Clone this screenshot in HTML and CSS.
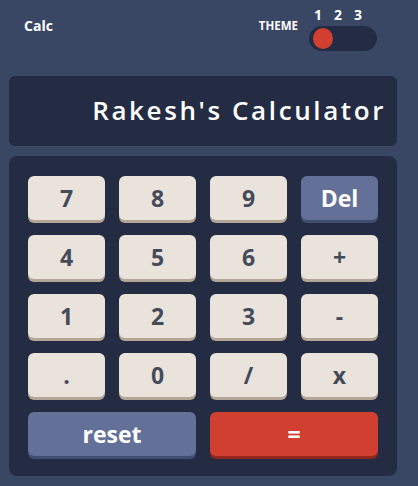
FILE: index.html
```html
<!DOCTYPE html>
<html lang="en">
<head>
<meta charset="utf-8">
<title>Calc</title>
<link rel="stylesheet" href="styles.css">
</head>
<body>
<div class="app">
  <header class="header">
    <h1 class="brand">Calc</h1>
    <div class="theme">
      <span class="theme-label">THEME</span>
      <div class="theme-switch">
        <div class="theme-nums"><span>1</span><span>2</span><span>3</span></div>
        <div class="toggle"><span class="knob"></span></div>
      </div>
    </div>
  </header>
  <div class="screen">Rakesh's Calculator</div>
  <div class="keypad">
    <button class="key">7</button>
    <button class="key">8</button>
    <button class="key">9</button>
    <button class="key key-blue">Del</button>
    <button class="key">4</button>
    <button class="key">5</button>
    <button class="key">6</button>
    <button class="key">+</button>
    <button class="key">1</button>
    <button class="key">2</button>
    <button class="key">3</button>
    <button class="key">-</button>
    <button class="key">.</button>
    <button class="key">0</button>
    <button class="key">/</button>
    <button class="key">x</button>
    <button class="key key-blue key-wide">reset</button>
    <button class="key key-red key-wide">=</button>
  </div>
</div>
</body>
</html>
```
FILE: styles.css
```css
* { box-sizing: border-box; }
html, body { margin: 0; padding: 0; }
body {
  background: #3a4764;
  font-family: "Open Sans", "Noto Sans", sans-serif;
  color: #ffffff;
  width: 418px;
  height: 486px;
  overflow: hidden;
}
.app {
  padding: 0 21px 0 9px;
}
.header {
  height: 76px;
  display: flex;
  justify-content: space-between;
  align-items: flex-start;
  padding: 0 20px 0 15px;
}
.brand {
  margin: 17px 0 0 0;
  font-size: 14px;
  font-weight: 700;
  line-height: 18px;
}
.theme {
  display: flex;
  align-items: flex-start;
  padding-top: 6px;
}
.theme-label {
  font-size: 11.5px;
  font-weight: 700;
  line-height: 14px;
  margin-top: 13px;
  margin-right: 11px;
}
.theme-switch {
  display: flex;
  flex-direction: column;
}
.theme-nums {
  display: flex;
  height: 20px;
  margin-left: -1px;
  font-size: 14px;
  font-weight: 700;
  line-height: 17px;
}
.theme-nums span {
  width: 20px;
  text-align: center;
}
.toggle {
  width: 68px;
  height: 25px;
  border-radius: 13px;
  background: #232c43;
  padding: 2px 4px;
  display: flex;
  align-items: center;
}
.knob {
  width: 20px;
  height: 21px;
  border-radius: 50%;
  background: #d03f2f;
}
.screen {
  height: 70px;
  background: #232c43;
  border-radius: 6px;
  display: flex;
  align-items: center;
  justify-content: flex-end;
  padding: 0 11px 2px 0;
  font-size: 26px;
  font-weight: 600;
  letter-spacing: 2.6px;
}
.keypad {
  margin-top: 10px;
  background: #232c43;
  border-radius: 8px;
  padding: 20px 19px 20px 19px;
  display: grid;
  grid-template-columns: repeat(4, 1fr);
  column-gap: 14px;
  row-gap: 15px;
}
.key {
  height: 44px;
  border: 0;
  border-radius: 6px;
  background: #eae3dc;
  box-shadow: 0 3px 0 #b4a597;
  color: #444b5a;
  font-family: "Open Sans", "Noto Sans", sans-serif;
  font-size: 23px;
  font-weight: 700;
  padding: 0;
  line-height: 1;
}
.key-blue {
  background: #637097;
  box-shadow: 0 3px 0 #404e72;
  color: #ffffff;
}
.key-red {
  background: #d03f2f;
  box-shadow: 0 3px 0 #93261a;
  color: #ffffff;
}
.key-wide {
  grid-column: span 2;
}
```
